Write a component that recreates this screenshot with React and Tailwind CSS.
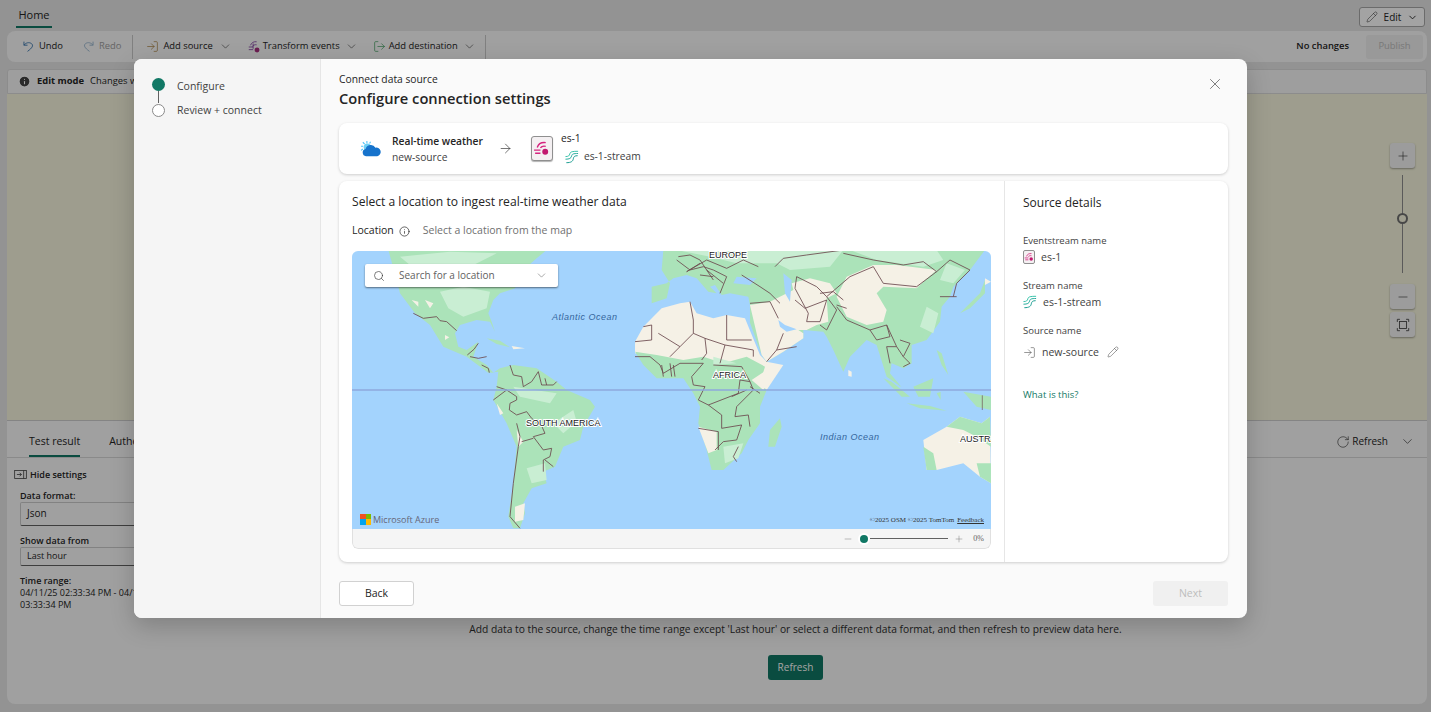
import {
  ChevronDown,
  LogIn,
  LogOut,
  Minus,
  Pencil,
  Plus,
  RotateCw,
  Search,
  X,
  Info,
  ArrowRight,
} from "lucide-react";

const UndoIcon = ({ flip, className }) => (
  <svg viewBox="0 0 20 20" fill="none" stroke="currentColor" strokeWidth="1.3" className={className} style={flip ? { transform: "scaleX(-1)" } : undefined}>
    <path d="M3 2.500v5.500h5.500M3 8c3-4 8-5 11.500-2.500C18 8.500 16 12 8.500 17.500" />
  </svg>
);

const TransformIcon = () => (
  <svg viewBox="0 0 16 16" fill="none" className="w-[14px] h-[14px]">
    <path d="M2 8h5M2 11h5M4 6c1-3 4-4.500 7-4M6 7.500c1-1.500 3-2.500 5-2M7 4v6" stroke="#8a4ca8" strokeWidth="1" />
    <circle cx="11.500" cy="11.500" r="2.800" fill="#a8307f" />
  </svg>
);

const EventstreamIcon = ({ large }) => (
  <div className={`flex items-center justify-center border border-[#8f8f8f] bg-[#f4f0f2] ${large ? "w-[22px] h-[25px] rounded-[3px] shadow-[0_1px_1px_rgba(0,0,0,0.3)]" : "w-[12px] h-[14px] rounded-[2px]"}`}>
    <svg viewBox="0 0 16 16" fill="none" className={large ? "w-[17px] h-[17px]" : "w-[10px] h-[10px]"}>
      <path d="M1 9.500h6M2 12.500h5M4 7c1-3 4-5 8-4.500M7 7.500c1-1.500 3-2 5-1.500" stroke="#d6237f" strokeWidth="1.300" />
      <circle cx="11.500" cy="11" r="2.800" fill="#c2186f" />
    </svg>
  </div>
);

const StreamIcon = () => (
  <svg viewBox="0 0 16 16" fill="none" className="w-[14px] h-[14px] shrink-0" strokeWidth="1.100" strokeLinecap="round">
    <path d="M1 7.500C4 7.500 5 6.500 5.500 4.500 6 2 8 1.500 14.500 1.500" stroke="#35c2a8" />
    <path d="M1 10.500C5 10.500 7 9.500 7.500 7 8 4.500 9.500 4 14.500 4" stroke="#1fa99a" />
    <path d="M2 14.500C7 14.500 9 13 9.500 10 10 7.500 11 6.500 14 6.500" stroke="#149a8e" />
  </svg>
);

const CloudIcon = () => (
  <svg viewBox="0 0 24 20" className="w-[23px] h-[18px]">
    <g stroke="#4fc3f7" strokeWidth="1.200">
      <path d="M8 1v2.500M1.500 7h2.500M3.500 2.500l2 2M1.500 11.500l2-1.500M12 2l-1 2" />
    </g>
    <circle cx="8.500" cy="8" r="4" fill="#6fd0f5" />
    <path d="M7 18a4 4 0 0 1-.500-7.900A6 6 0 0 1 17.500 8.500 4.800 4.800 0 0 1 19.500 18z" fill="#1673cc" />
  </svg>
);

const FitIcon = () => (
  <svg viewBox="0 0 16 16" fill="none" stroke="#424242" strokeWidth="1" className="h-[14px] w-[14px]">
    <path d="M1.500 4.500v-3h3M11.500 1.500h3v3M14.500 11.500v3h-3M4.500 14.500h-3v-3" />
    <rect x="4" y="4" width="8" height="8" />
  </svg>
);

const HideIcon = () => (
  <svg viewBox="0 0 14 10" fill="none" stroke="#424242" strokeWidth="0.900" className="h-[9px] w-[13px]">
    <rect x="0.500" y="0.500" width="13" height="9" />
    <path d="M10.500 0.500v9M3 5h5M6 3l2 2-2 2" />
  </svg>
);

const WorldMap = () => (
  <svg viewBox="0 0 639 278" className="absolute inset-0 w-full h-full">
    <rect width="639" height="278" fill="#a3d3fd" />

    {/* americas */}
    <g transform="translate(-2,-1) scale(0.3333)">
      <path fill="#abe3b9" d="M115 0L590 0L560 25L520 60L495 115L450 130L430 150L415 190L425 215L435 245L420 215L380 210L330 225L315 250L325 290L350 300L385 275L370 320L410 345L430 368L450 355L490 345L560 355L620 395L650 420L720 450L735 470L700 530L690 570L640 590L615 650L580 665L590 700L545 715L520 760L525 790L510 835L490 835L475 800L490 700L500 590L470 520L430 450L440 410L445 365L415 368L350 320L280 290L240 225L195 190L150 130L140 90Z" />
      <path fill="#c9eed3" d="M270 125L340 110L420 125L410 175L340 200L295 175ZM150 20L300 5L440 10L360 50L210 70ZM530 655L585 640L590 690L545 700ZM490 410L620 430L600 460L510 440ZM610 520L670 480L680 515L640 550Z" />
      <path fill="#f5f1e6" d="M185 150L205 155L205 170ZM225 150L250 160L240 175ZM285 255L298 262L285 270ZM500 540L520 575L505 590ZM495 770L525 760L520 810L495 815ZM440 460L460 490L450 495Z" />
      <path fill="#abe3b9" d="M410 265L450 272L480 292L440 282Z" />
      <path fill="#f5f1e6" d="M485 288L525 295L490 298Z" />
      <g fill="none" stroke="#6d4b50" strokeWidth="2.600">
        <path d="M190 190L220 205L260 200L270 212L290 215L320 242" />
        <path d="M352 315L372 298L385 280M360 320L385 325L410 320M395 345L415 355L418 368" />
        <path d="M480 345L490 375L515 380L520 410L545 395L565 365L575 405L610 405L620 395M585 385L590 405" />
        <path d="M430 450L470 420L500 440L500 450L480 460L478 480L500 495L530 485L545 505L575 528L585 550L550 560L580 600L605 595L600 620L580 630L580 665M585 630L610 650" />
        <path d="M500 520L510 560L505 590L490 700L480 800L510 835M515 575L550 565M440 410L470 420" />
      </g>
    </g>

    {/* europe, africa, asia, oceania */}
    <g transform="translate(318,-1) scale(0.3333)">
      <path fill="#f5f1e6" d="M-105 275L-80 230L-25 175L30 160L60 155L80 190L130 205L170 195L225 205L232 222L270 315L290 335L340 345L290 420L270 450L100 360L-105 310Z" />
      <path fill="#abe3b9" d="M-105 305L-40 315L40 330L100 320L160 340L230 320L285 350L270 400L290 420L270 470L270 520L235 570L215 610L160 660L125 660L110 600L85 520L90 470L70 430L40 385L-40 385L-80 345Z" />
      <path fill="#f5f1e6" d="M85 530L140 545L140 600L115 610ZM245 390L290 360L320 365L280 420Z" />
      <path fill="#c9eed3" d="M160 590L220 580L205 625L165 640ZM130 320L200 340L130 345Z" />
      <path fill="#abe3b9" d="M295 590L300 540L330 505L335 530L315 590Z" />

      <path fill="#abe3b9" d="M-20 0L945 0L900 60L885 75L850 110L840 140L815 170L810 215L770 270L725 285L725 340L700 355L665 340L660 370L695 412L650 380L620 285L590 270L540 320L520 365L490 300L470 260L460 245L400 240L400 265L340 305L290 335L275 315L240 218L240 165L235 140L180 130L155 135L135 105L120 110L140 130L115 125L80 85L50 75L10 85L-10 100L-55 110L-55 160L-10 145L0 100L-25 60Z" />
      <path fill="#c9eed3" d="M20 0L520 0L480 50L360 60L320 40L200 40L120 20ZM540 0L800 0L820 30L760 50L620 30ZM770 170L805 190L790 250L750 230ZM830 40L885 60L850 100L810 90Z" />
      <path fill="#f5f1e6" d="M240 165L300 155L330 170L325 210L345 225L385 240L400 250L400 265L340 305L290 335L275 315ZM300 155L370 120L365 100L420 85L480 100L500 130L470 145L475 215L440 225L410 240L385 240L345 225L325 210L330 170ZM530 80L610 45L680 45L800 60L760 95L740 115L640 110L620 130L650 180L640 215L590 225L530 200L500 140Z" />

      <path fill="#a3d3fd" d="M200 80L260 85L240 105L190 100ZM340 70L365 90L360 155L345 130ZM325 210L345 225L380 238L350 245L330 230Z" />

      <path fill="#f5f1e6" d="M760 570L830 530L870 500L935 520L960 500L963 700L930 680L880 640L800 660L770 660Z" />
      <path fill="#abe3b9" d="M830 530L870 500L935 520L960 500L963 590L920 560L880 540ZM760 590L790 610L800 660L770 660ZM920 640L963 640L963 700L930 680Z" />
      <path fill="#abe3b9" d="M640 385L665 395L720 440L695 440ZM710 460L780 468L830 482L750 475ZM730 410L790 385L780 440L745 440ZM800 430L812 425L812 450ZM880 425L963 440L963 480L920 470ZM800 300L815 310L835 375L815 345ZM870 190L930 130L945 90L945 130L900 175Z" />
      <path fill="#f5f1e6" d="M535 360L545 365L545 380L535 378ZM945 85L963 95L945 105Z" />

      <g fill="none" stroke="#6d4b50" strokeWidth="2.600">
        <path d="M60 155L70 210L70 250L30 290L0 320M70 250L105 265L165 285L150 340M170 195L170 270L245 270M105 265L110 310L95 330M165 285L250 300L250 320" />
        <path d="M-80 230L-55 225L-55 270L-105 275M-35 250L30 290M-105 320L-60 320L-30 345L-20 370L30 340L100 340M-25 345L-20 380M0 340L5 380M10 345L15 380" />
        <path d="M100 340L65 380L70 405L105 410L85 450L115 465L155 495L155 535L215 525L200 570L160 575L135 600M85 535L145 545L145 600M115 465L205 430L210 390L240 395L250 420L200 470L195 500L235 495L240 530M130 345L215 350L240 395M270 430L240 410" />
        <path d="M20 30L60 60L100 50L130 60L170 80L150 130M50 65L110 30L170 55L220 30L265 50M90 30L130 90M110 60L160 100M50 65L90 40M215 75L270 110L300 130L330 160M90 75L130 80M25 20L60 15L90 30" />
        <path d="M240 160L300 155L325 205M290 335L320 300L380 290M320 300L340 250" />
        <path d="M315 50L340 25L410 15L520 0M380 80L440 110L470 140L540 80L610 50L640 100L740 110L800 65L760 35L700 45L610 30L520 10M800 65L840 30L900 60L860 100L850 140" />
        <path d="M380 80L375 115L415 190L410 215L450 215L470 150M375 150L405 175L470 150M470 140L500 180L470 240L450 225M500 170L530 210L600 240L650 225L660 260L620 270L600 240M650 225L680 290L650 290L660 340M690 270L720 280L700 320L720 340L700 350M680 290L700 320M810 140L860 140" />
        <path d="M450 130L490 125L520 150M500 165L530 175M185 440L230 420M205 590L190 620L200 635" />
      </g>
      <path d="M937 436V480" stroke="#6d4b50" strokeWidth="2" />
    </g>

    <line x1="0" y1="139" x2="639" y2="139" stroke="#8ea9dc" strokeWidth="1.500" />

    <g fontFamily="Liberation Sans, sans-serif">
      <text x="200" y="69" fontSize="9" fontStyle="italic" letterSpacing="0.500" fill="#34659c">Atlantic Ocean</text>
      <text x="468" y="189" fontSize="9" fontStyle="italic" letterSpacing="0.500" fill="#34659c">Indian Ocean</text>
      <g fontSize="9" fill="#222" stroke="#fff" strokeWidth="2" paintOrder="stroke">
        <text x="174" y="175">SOUTH AMERICA</text>
        <text x="361" y="127">AFRICA</text>
        <text x="357" y="7">EUROPE</text>
        <text x="608" y="191">AUSTRALIA</text>
      </g>
    </g>
  </svg>
);

const SourceField = ({ label, icon, value, action, gap }) => (
  <div className={`flex flex-col ${gap}`}>
    <span className="text-[9.5px] leading-[13px] text-[#424242]">{label}</span>
    <div className="flex items-center gap-[6px] text-[10.5px] leading-[14px] text-[#424242]">
      {icon}
      <span>{value}</span>
      {action}
    </div>
  </div>
);

const App = () => {
  return (
    <div className="relative h-[712px] w-full overflow-hidden bg-[#e6e6e6] pl-[7px] pr-[4px] text-[#242424] font-['Open_Sans',sans-serif]">
      {/* page behind the dialog */}
      <div className="flex h-[31px] items-start justify-between pt-[7px] pr-[2px]">
        <div className="ml-[9px] flex h-[21px] w-[36px] justify-center border-b-2 border-[#117865] text-[11px] leading-[16px]">Home</div>
        <button className="flex h-[20px] w-[66px] items-center justify-center gap-[6px] rounded-[3px] border border-[#a8a8a8] bg-white text-[10px]">
          <Pencil className="h-[12px] w-[12px]" strokeWidth={1} />
          Edit
          <ChevronDown className="h-[11px] w-[11px]" />
        </button>
      </div>
      <div className="flex h-[31px] items-center justify-between rounded-lg bg-[#fafafa] pl-[15px] pr-[4px] text-[9.4px]">
        <div className="flex items-center">
          <UndoIcon className="h-[13px] w-[13px] text-[#2d6da8]" />
          <span className="ml-[4px]">Undo</span>
          <UndoIcon flip className="ml-[19px] h-[13px] w-[13px] text-[#8fb0cc]" />
          <span className="ml-[4px] text-[#a0a0a0]">Redo</span>
          <div className="ml-[11px] mr-[13px] h-[24px] w-px bg-[#c8c8c8]" />
          <LogIn className="h-[13px] w-[13px] text-[#a87c3a]" strokeWidth={1.25} />
          <span className="ml-[4px]">Add source</span>
          <ChevronDown className="ml-[6px] h-[13px] w-[13px]" strokeWidth={1} />
          <span className="ml-[15px]"><TransformIcon /></span>
          <span className="ml-[2px]">Transform events</span>
          <ChevronDown className="ml-[5px] h-[13px] w-[13px]" strokeWidth={1} />
          <LogOut className="ml-[15px] h-[13px] w-[13px] text-[#3a9a5a]" strokeWidth={1.25} />
          <span className="ml-[3px]">Add destination</span>
          <ChevronDown className="ml-[5px] h-[13px] w-[13px]" strokeWidth={1} />
          <div className="ml-[9px] h-[24px] w-px bg-[#c8c8c8]" />
        </div>
        <div className="flex items-center gap-[17px]">
          <span className="font-semibold">No changes</span>
          <span className="flex h-[24px] w-[57px] items-center justify-center rounded-[3px] bg-[#efefef] text-[#bdbdbd]">Publish</span>
        </div>
      </div>
      <div className="mt-[7px] flex h-[25px] items-center gap-[6px] rounded-t-[3px] border border-[#dcdcdc] bg-[#f7f7f7] pl-[10px] text-[9.4px]">
        <Info className="h-[13px] w-[13px] fill-[#424242] text-white" strokeWidth={2} />
        <span className="font-bold">Edit mode</span>
        <span>Changes will be saved</span>
      </div>
      <div className="flex h-[326px] flex-col items-end bg-[#f7f6de] pr-[12px] pt-[49px]">
        <div className="flex w-[25px] flex-col items-center">
          <div className="flex h-[25px] w-[25px] items-center justify-center rounded-[3px] bg-[#f5f5f5] shadow-[0_1px_2px_rgba(0,0,0,0.35)]">
            <Plus className="h-[14px] w-[14px]" strokeWidth={1} />
          </div>
          <div className="relative mb-[11px] mt-[7px] h-[98px] w-px bg-[#8d8d8d]">
            <div className="absolute left-[-5px] top-[38px] h-[11px] w-[11px] rounded-full border-2 border-[#707070] bg-[#f7f6de]" />
          </div>
          <div className="flex h-[25px] w-[25px] items-center justify-center rounded-[3px] bg-[#f5f5f5] shadow-[0_1px_2px_rgba(0,0,0,0.35)]">
            <Minus className="h-[14px] w-[14px]" strokeWidth={1} />
          </div>
          <div className="mt-[3px] flex h-[25px] w-[25px] items-center justify-center rounded-[3px] bg-[#f5f5f5] shadow-[0_1px_2px_rgba(0,0,0,0.35)]">
            <FitIcon />
          </div>
        </div>
      </div>
      <div className="h-[284px] rounded-b-lg border-t border-[#cfcfcf] bg-[#fafafa] pt-[13px]">
        <div className="flex h-[24px] justify-between border-b border-[#d8d8d8] pl-[22px] pr-[12px]">
          <div className="flex gap-[29px] text-[10.5px]">
            <span className="h-[23px] border-b-2 border-[#117865]">Test result</span>
            <span>Authoring errors</span>
          </div>
          <div className="flex items-center pb-[8px] text-[10px]">
            <RotateCw className="h-[14px] w-[14px]" strokeWidth={1} />
            <span className="ml-[2px]">Refresh</span>
            <ChevronDown className="ml-[12px] h-[15px] w-[15px]" strokeWidth={1} />
          </div>
        </div>
        <div className="relative">
          <div className="flex w-[300px] flex-col pl-[7px] pt-[10px] text-[9px]">
            <div className="flex items-center gap-[3px] font-semibold">
              <HideIcon />
              Hide settings
            </div>
            <div className="ml-[6px] mt-[8px] font-semibold leading-[12px]">Data format:</div>
            <div className="ml-[6px] flex h-[24px] w-[260px] items-center rounded-[2px] border border-[#ccc] border-b-[#616161] pl-[6px] text-[10px]">Json</div>
            <div className="ml-[6px] mt-[9px] font-semibold leading-[12px]">Show data from</div>
            <div className="ml-[6px] flex h-[19px] w-[260px] items-center rounded-[2px] border border-[#ccc] border-b-[#616161] pl-[6px] text-[9px]">Last hour</div>
            <div className="ml-[6px] mt-[9px] font-semibold leading-[12px]">Time range:</div>
            <div className="ml-[6px] w-[170px] leading-[12.500px]">04/11/25 02:33:34 PM - 04/11/25 03:33:34 PM</div>
          </div>
          <div className="absolute left-[400px] top-[164px] flex w-[777px] flex-col items-center gap-[19px]">
            <span className="whitespace-nowrap text-[10.25px] leading-[14px] text-[#303030]">Add data to the source, change the time range except 'Last hour' or select a different data format, and then refresh to preview data here.</span>
            <button className="flex h-[25px] w-[55px] items-center justify-center rounded-[3px] bg-[#117865] text-[10px] text-white">Refresh</button>
          </div>
        </div>
      </div>

      {/* dim layer */}
      <div className="absolute inset-0 bg-black/[0.36]" />

      {/* dialog */}
      <div className="absolute left-[134px] top-[59px] flex h-[559px] w-[1113px] overflow-hidden rounded-lg bg-[#fafafa] shadow-[0_8px_24px_rgba(0,0,0,0.2)]">
        <div className="flex w-[187px] shrink-0 flex-col border-r border-[#e6e6e6] bg-[#f5f5f5] pl-[18px] pt-[18px]">
          <div className="flex items-center gap-[12px]">
            <span className="h-[13px] w-[13px] rounded-full bg-[#117865]" />
            <span className="relative top-[1.5px] text-[10.5px] leading-[14px] text-[#424242]">Configure</span>
          </div>
          <div className="ml-[6px] h-[12px] w-[1px] bg-[#616161]" />
          <div className="flex items-center gap-[12px]">
            <span className="h-[13px] w-[13px] rounded-full border border-[#8a8a8a] bg-white" />
            <span className="text-[10.5px] leading-[14px] text-[#424242]">Review + connect</span>
          </div>
        </div>

        <div className="flex min-w-0 flex-1 flex-col pl-[18px] pr-[19px] pt-[14px]">
          <div className="flex items-start justify-between">
            <div className="flex flex-col">
              <span className="text-[10.3px] leading-[13px]">Connect data source</span>
              <span className="mt-[2px] text-[14.7px] font-semibold leading-[20px]">Configure connection settings</span>
            </div>
            <X className="mr-[4px] mt-[2px] h-[18px] w-[18px] text-[#424242]" strokeWidth={0.9} />
          </div>

          <div className="mt-[15px] flex h-[51px] items-center rounded-lg bg-white pl-[20px] shadow-[0_1px_3px_rgba(0,0,0,0.18)]">
            <CloudIcon />
            <div className="ml-[10px] flex flex-col text-[10.25px] leading-[16px]">
              <span className="font-semibold">Real-time weather</span>
              <span className="text-[#424242]">new-source</span>
            </div>
            <ArrowRight className="ml-[15px] h-[15px] w-[15px]" strokeWidth={1} />
            <div className="ml-[18px]"><EventstreamIcon large /></div>
            <div className="ml-[8px] flex flex-col text-[10.25px] leading-[15px]">
              <span className="relative top-[-2px]">es-1</span>
              <div className="mt-[1px] flex items-center gap-[5px] pl-[4px] text-[#424242]">
                <StreamIcon />
                <span>es-1-stream</span>
              </div>
            </div>
          </div>

          <div className="mt-[7px] flex h-[381px] rounded-lg bg-white shadow-[0_1px_3px_rgba(0,0,0,0.18)]">
            <div className="flex w-[666px] flex-col border-r border-[#e6e6e6] px-[13px] pt-[13px]">
              <span className="text-[12.1px] font-medium leading-[16px]">Select a location to ingest real-time weather data</span>
              <div className="mt-[13px] flex h-[16px] items-center text-[10.5px]">
                <span className="font-medium">Location</span>
                <Info className="ml-[5px] h-[11px] w-[11px]" strokeWidth={1.5} />
                <span className="ml-[13px] text-[#707070]">Select a location from the map</span>
              </div>
              <div className="mt-[12px] overflow-hidden rounded-md">
                <div className="relative h-[278px]">
                  <WorldMap />
                  <div className="absolute left-[13px] top-[13px] flex h-[23px] w-[193px] items-center rounded-[2px] bg-white pl-[8px] pr-[10px] text-[10px] text-[#616161] shadow-[0_1px_2px_rgba(0,0,0,0.5)]">
                    <Search className="h-[12px] w-[12px] text-[#303030]" strokeWidth={1.25} />
                    <span className="ml-[14px]">Search for a location</span>
                    <ChevronDown className="ml-auto h-[13px] w-[13px]" strokeWidth={1} />
                  </div>
                  <div className="absolute bottom-[3px] left-[8px] flex items-center gap-[2px] text-[9px] text-[#667]">
                    <span className="grid h-[11px] w-[11px] grid-cols-2">
                      <span className="bg-[#f25022]" />
                      <span className="bg-[#7fba00]" />
                      <span className="bg-[#00a4ef]" />
                      <span className="bg-[#ffb900]" />
                    </span>
                    Microsoft Azure
                  </div>
                  <div className="absolute bottom-[4px] right-[7px] flex gap-[3px] font-['Liberation_Serif',serif] text-[7px] leading-[9px] text-[#333]">
                    <span>©2025 OSM ©2025 TomTom</span>
                    <span className="underline">Feedback</span>
                  </div>
                </div>
                <div className="flex h-[20px] items-center justify-end rounded-b-md border border-t-0 border-[#e0e0e0] bg-[#f5f5f5] pr-[6px] text-[8px] text-[#616161]">
                  <Minus className="h-[10px] w-[10px]" strokeWidth={1} />
                  <span className="relative ml-[5px] flex h-[12px] w-[12px] items-center justify-center rounded-full bg-white">
                    <span className="h-[8px] w-[8px] rounded-full bg-[#117865]" />
                  </span>
                  <span className="h-px w-[78px] bg-[#616161]" />
                  <Plus className="ml-[6px] h-[10px] w-[10px]" strokeWidth={1} />
                  <span className="ml-[9px] font-['Liberation_Serif',serif]">0%</span>
                </div>
              </div>
            </div>
            <div className="flex flex-1 flex-col pl-[18px] pt-[14px]">
              <span className="text-[12px] font-medium leading-[16px]">Source details</span>
              <SourceField gap="mt-[23px] gap-[3px]" label="Eventstream name" value="es-1" icon={<EventstreamIcon />} />
              <SourceField gap="mt-[15px] gap-[3px]" label="Stream name" value="es-1-stream" icon={<StreamIcon />} />
              <SourceField
                gap="mt-[15px] gap-[8px]"
                label="Source name"
                value="new-source"
                icon={<LogIn className="h-[13px] w-[13px]" strokeWidth={1} />}
                action={<Pencil className="ml-[2px] h-[12px] w-[12px]" strokeWidth={1} />}
              />
              <span className="mt-[29px] text-[9.5px] leading-[13px] text-[#117865]">What is this?</span>
            </div>
          </div>

          <div className="mt-[19px] flex justify-between">
            <button className="flex h-[25px] w-[75px] items-center justify-center rounded-[3px] border border-[#d1d1d1] bg-white text-[10.5px] font-medium">Back</button>
            <button className="flex h-[25px] w-[75px] items-center justify-center rounded-[3px] bg-[#f0f0f0] text-[10.5px] text-[#bdbdbd]">Next</button>
          </div>
        </div>
      </div>
    </div>
  );
};

export default App;
